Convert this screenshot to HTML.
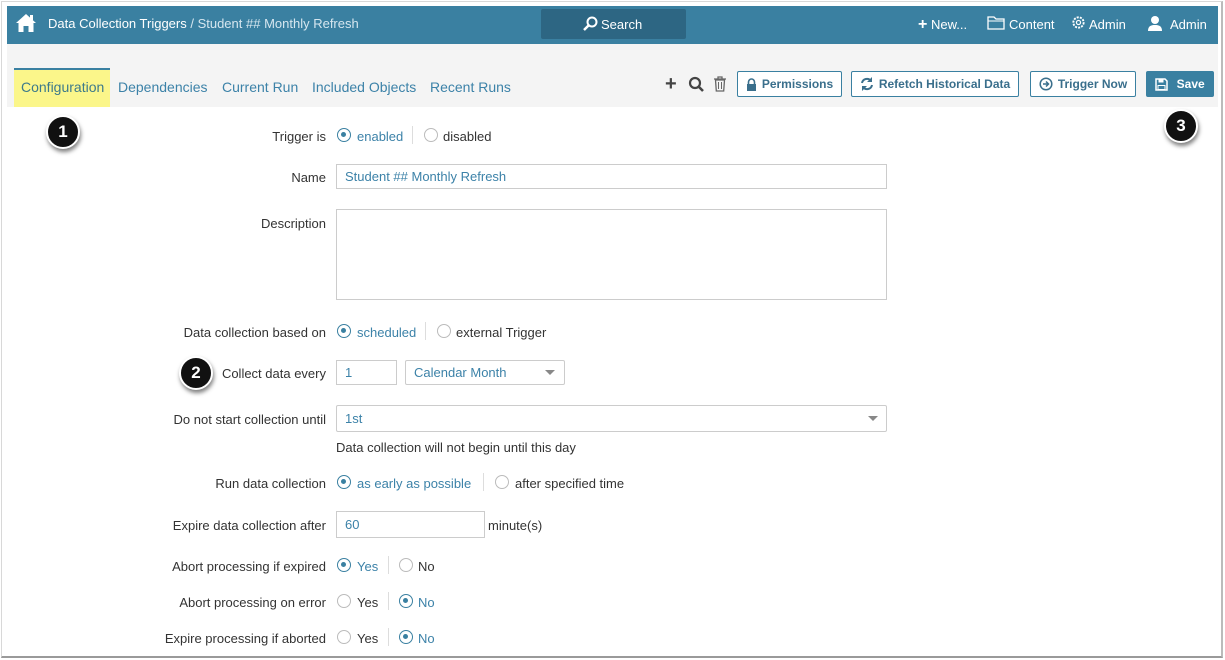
<!DOCTYPE html>
<html><head><meta charset="utf-8"><style>
*{box-sizing:border-box;margin:0;padding:0}
body{width:1225px;height:660px;background:#fff;font-family:"Liberation Sans",Arial,sans-serif;position:relative;overflow:hidden;color:#333}
.a{position:absolute;white-space:nowrap}
.frame{position:absolute;left:1px;top:1px;width:1222px;height:657px;border:1px solid #d8d8d8;border-bottom:2px solid #9a9a9a;border-right:2px solid #bbb}
.top{left:7px;top:6px;width:1211px;height:38px;background:#3a80a1}
.sub{left:7px;top:44px;width:1211px;height:63px;background:#f4f4f4}
.tw{color:#fff;font-size:13px}
.tab{font-size:14px;color:#3c82a8;top:79px}
.lbl{font-size:13px;color:#333;right:899px;text-align:right;margin-top:1px}
.inp{border:1px solid #ccc;background:#fff;font-size:13px;color:#3c82a8;padding-left:8px}
.rad{width:14px;height:14px;border:1px solid #bbb;border-radius:50%;background:#fff}
.rad.on{border:1.5px solid #3a80a1}
.rad.on::after{content:"";position:absolute;left:3px;top:3px;width:5px;height:5px;border-radius:50%;background:#3a80a1}
.rt{font-size:13px;margin-top:1px}
.sep{width:1px;height:18px;background:#ddd}
.btn{top:71px;height:26px;border:1px solid #3a80a1;border-radius:2px;font-size:12px;font-weight:bold;color:#3a6f8c;background:#fff;display:flex;align-items:center;justify-content:center;gap:5px}
.num{width:34px;height:34px;border-radius:50%;background:#111;color:#fff;font-size:17px;font-weight:bold;display:flex;align-items:center;justify-content:center;box-shadow:1px 3px 4px rgba(0,0,0,.5);border:2px solid #fff}
</style></head><body>
<div class="frame"></div>
<div class="a top"></div>
<div class="a sub"></div>
<svg class="a" style="left:15px;top:13px" width="22" height="20" viewBox="0 0 22 20"><path d="M11 1 L1 10 L3.5 10 L3.5 19 L8.5 19 L8.5 13 L13.5 13 L13.5 19 L18.5 19 L18.5 10 L21 10 Z" fill="#fff"/><rect x="15" y="2" width="3" height="5" fill="#fff"/></svg>
<div class="a tw" style="left:48px;top:16px">Data Collection Triggers <span style="color:#d5e6ef">/ Student ## Monthly Refresh</span></div>
<div class="a" style="left:541px;top:9px;width:145px;height:30px;background:#2d6683;border-radius:2px"></div>
<svg class="a" style="left:582px;top:16px" width="16" height="16" viewBox="0 0 16 16"><circle cx="10" cy="6" r="4.5" stroke="#fff" stroke-width="2" fill="none"/><path d="M7 9 L2 14" stroke="#fff" stroke-width="2.5"/></svg>
<div class="a tw" style="left:601px;top:17px">Search</div>
<div class="a tw" style="left:918px;top:16px"><b style="font-size:16px">+</b> New...</div>
<svg class="a" style="left:987px;top:16px" width="18" height="14" viewBox="0 0 18 14"><path d="M1 1h6l2 2h8v10H1z" fill="none" stroke="#fff" stroke-width="1.3"/><path d="M1 5h16" stroke="#fff" stroke-width="1"/></svg>
<div class="a tw" style="left:1009px;top:17px">Content</div>
<svg class="a" style="left:1071px;top:15px" width="15" height="15" viewBox="0 0 16 16"><circle cx="8" cy="8" r="5.5" fill="none" stroke="#fff" stroke-width="2" stroke-dasharray="2.2 1.2"/><circle cx="8" cy="8" r="2.2" fill="none" stroke="#fff" stroke-width="1.3"/></svg>
<div class="a tw" style="left:1089px;top:17px">Admin</div>
<svg class="a" style="left:1147px;top:15px" width="16" height="16" viewBox="0 0 16 16"><circle cx="8" cy="5" r="4" fill="#fff"/><path d="M1 16c0-5 3-6 7-6s7 1 7 6z" fill="#fff"/></svg>
<div class="a tw" style="left:1170px;top:17px">Admin</div>

<div class="a" style="left:14px;top:68px;width:96px;height:39px;background:#fbf68a;border-top:2px solid #3a80a1"></div>
<div class="a tab" style="left:21px;color:#3d7a8a">Configuration</div>
<div class="a tab" style="left:118px">Dependencies</div>
<div class="a tab" style="left:222px">Current Run</div>
<div class="a tab" style="left:312px">Included Objects</div>
<div class="a tab" style="left:430px">Recent Runs</div>

<div class="a" style="left:665px;top:74px;font-size:20px;font-weight:bold;color:#444;line-height:20px">+</div>
<svg class="a" style="left:688px;top:76px" width="17" height="17" viewBox="0 0 17 17"><circle cx="7" cy="7" r="5" fill="none" stroke="#444" stroke-width="2.2"/><path d="M10.5 10.5 L15 15" stroke="#444" stroke-width="2.6"/></svg>
<svg class="a" style="left:713px;top:76px" width="14" height="16" viewBox="0 0 14 16"><path d="M1 3h12M5 3V1h4v2" stroke="#666" stroke-width="1.3" fill="none"/><path d="M2.5 4h9l-.8 11h-7.4z" fill="none" stroke="#666" stroke-width="1.3"/><path d="M5.5 6v7M8.5 6v7" stroke="#666"/></svg>
<div class="a btn" style="left:737px;width:105px"><svg width="11" height="13" viewBox="0 0 11 13"><path d="M2.5 6V4a3 3 0 0 1 6 0v2" fill="none" stroke="#3a6f8c" stroke-width="1.6"/><rect x="1" y="6" width="9" height="7" fill="#3a6f8c"/></svg>Permissions</div>
<div class="a btn" style="left:851px;width:168px"><svg width="14" height="14" viewBox="0 0 14 14"><path d="M2 6a5 5 0 0 1 9-2M12 8a5 5 0 0 1-9 2" fill="none" stroke="#3a6f8c" stroke-width="2"/><path d="M12 0v5H7zM2 14V9h5z" fill="#3a6f8c"/></svg>Refetch Historical Data</div>
<div class="a btn" style="left:1030px;width:106px"><svg width="14" height="14" viewBox="0 0 14 14"><circle cx="7" cy="7" r="5.8" fill="none" stroke="#3a6f8c" stroke-width="1.5"/><path d="M4 7h5M7 4.5L9.5 7 7 9.5" fill="none" stroke="#3a6f8c" stroke-width="1.5"/></svg>Trigger Now</div>
<div class="a btn" style="left:1146px;width:68px;background:#3a80a1;color:#fff"><svg width="13" height="13" viewBox="0 0 13 13"><path d="M1 1h9l2 2v9H1z" fill="none" stroke="#fff" stroke-width="1.5"/><rect x="3.5" y="1.5" width="5" height="3" fill="#fff"/><rect x="3" y="7.5" width="7" height="4" fill="none" stroke="#fff"/></svg>&nbsp;Save</div>

<div class="a num" style="left:46px;top:115px">1</div>
<div class="a num" style="left:179px;top:356px">2</div>
<div class="a num" style="left:1164px;top:109px">3</div>

<div class="a lbl" style="top:128px">Trigger is</div>
<div class="a rad on" style="left:337px;top:128px"></div><div class="a rt" style="left:357px;top:128px;color:#3c82a8">enabled</div>
<div class="a sep" style="left:412px;top:126px"></div>
<div class="a rad" style="left:424px;top:128px"></div><div class="a rt" style="left:443px;top:128px">disabled</div>

<div class="a lbl" style="top:169px">Name</div>
<div class="a inp" style="left:336px;top:164px;width:551px;height:25px;line-height:23px">Student ## Monthly Refresh</div>
<div class="a lbl" style="top:215px">Description</div>
<div class="a inp" style="left:336px;top:209px;width:551px;height:91px"></div>

<div class="a lbl" style="top:324px">Data collection based on</div>
<div class="a rad on" style="left:337px;top:324px"></div><div class="a rt" style="left:357px;top:324px;color:#3c82a8">scheduled</div>
<div class="a sep" style="left:425px;top:322px"></div>
<div class="a rad" style="left:437px;top:324px"></div><div class="a rt" style="left:456px;top:324px">external Trigger</div>

<div class="a lbl" style="top:365px">Collect data every</div>
<div class="a inp" style="left:336px;top:360px;width:61px;height:25px;line-height:23px">1</div>
<div class="a inp" style="left:405px;top:360px;width:160px;height:25px;line-height:23px;border-radius:2px">Calendar Month</div>
<div class="a" style="left:545px;top:370px;border-left:5px solid transparent;border-right:5px solid transparent;border-top:5px solid #888"></div>

<div class="a lbl" style="top:411px">Do not start collection until</div>
<div class="a inp" style="left:336px;top:405px;width:551px;height:27px;line-height:25px;border-radius:2px">1st</div>
<div class="a" style="left:868px;top:416px;border-left:5px solid transparent;border-right:5px solid transparent;border-top:5px solid #888"></div>
<div class="a rt" style="left:336px;top:439px">Data collection will not begin until this day</div>

<div class="a lbl" style="top:475px">Run data collection</div>
<div class="a rad on" style="left:337px;top:475px"></div><div class="a rt" style="left:357px;top:475px;color:#3c82a8">as early as possible</div>
<div class="a sep" style="left:483px;top:473px"></div>
<div class="a rad" style="left:495px;top:475px"></div><div class="a rt" style="left:515px;top:475px">after specified time</div>

<div class="a lbl" style="top:517px">Expire data collection after</div>
<div class="a inp" style="left:336px;top:511px;width:149px;height:27px;line-height:25px">60</div>
<div class="a rt" style="left:488px;top:517px">minute(s)</div>

<div class="a lbl" style="top:558px">Abort processing if expired</div>
<div class="a rad on" style="left:337px;top:558px"></div><div class="a rt" style="left:357px;top:558px;color:#3c82a8">Yes</div>
<div class="a sep" style="left:388px;top:556px"></div>
<div class="a rad" style="left:399px;top:558px"></div><div class="a rt" style="left:418px;top:558px">No</div>

<div class="a lbl" style="top:594px">Abort processing on error</div>
<div class="a rad" style="left:337px;top:594px"></div><div class="a rt" style="left:357px;top:594px">Yes</div>
<div class="a sep" style="left:388px;top:592px"></div>
<div class="a rad on" style="left:399px;top:594px"></div><div class="a rt" style="left:418px;top:594px;color:#3c82a8">No</div>

<div class="a lbl" style="top:630px">Expire processing if aborted</div>
<div class="a rad" style="left:337px;top:630px"></div><div class="a rt" style="left:357px;top:630px">Yes</div>
<div class="a sep" style="left:388px;top:628px"></div>
<div class="a rad on" style="left:399px;top:630px"></div><div class="a rt" style="left:418px;top:630px;color:#3c82a8">No</div>
</body></html>
